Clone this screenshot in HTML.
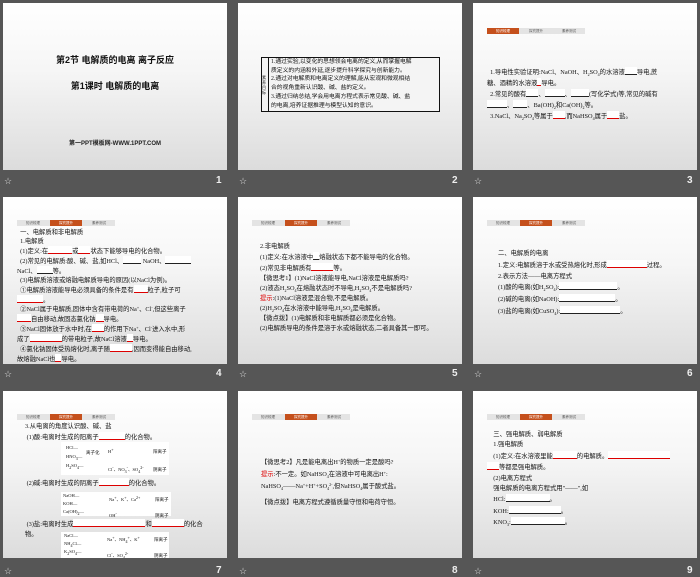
<!DOCTYPE html>
<html><head><meta charset="utf-8"><style>
body{margin:0;width:700px;height:577px;background:#565656;position:relative;overflow:hidden;font-family:"Liberation Serif","Noto Sans CJK SC",sans-serif;}
.s{position:absolute;width:224px;height:167px;background:linear-gradient(#fff 0%,#f6f6f6 40%,#dcdcdc 100%);overflow:hidden;}
.lb{position:absolute;color:#ddd;font-size:9px;font-family:"Liberation Sans",sans-serif;}
.n{position:absolute;color:#eee;font-size:10px;font-weight:bold;font-family:"Liberation Sans",sans-serif;}
.t{position:absolute;font-size:6.3px;line-height:10px;color:#111;white-space:nowrap;}
sub,sup{line-height:0;font-size:4px;vertical-align:baseline;position:relative}
sup{top:-0.6em}sub{top:0.4em}
.tabs{position:absolute;left:14px;top:25px;height:6px;width:98px;background:#e4e4e4;}
.tabs i{position:absolute;top:0;height:6px;width:32px;font-style:normal;font-size:3.5px;line-height:6px;text-align:center;color:#555;}
.tabs i.o{background:#c5501c;color:#fff}
.r{color:#d00}
.u{display:inline-block;border-bottom:0.7px solid #222;background:#fff;height:7px;vertical-align:-1px}
.ur{display:inline-block;border-bottom:0.8px solid #d00;background:#fff;height:7px;vertical-align:-1px}
.sm{font-size:4.5px}
</style></head><body>

<div class="s" style="left:3px;top:3px">
<div class="t" style="left:0;width:224px;text-align:center;top:52px;font-size:9px;font-weight:bold;font-family:'Liberation Sans','Noto Sans CJK SC',sans-serif;color:#111">第2节 电解质的电离 离子反应</div>
<div class="t" style="left:0;width:224px;text-align:center;top:78px;font-size:9px;font-weight:bold;font-family:'Liberation Sans','Noto Sans CJK SC',sans-serif;color:#111">第1课时 电解质的电离</div>
<div class="t" style="left:0;width:224px;text-align:center;top:136px;font-size:6px;font-weight:bold;font-family:'Liberation Sans','Noto Sans CJK SC',sans-serif;color:#222">第一PPT模板网-WWW.1PPT.COM</div>
</div>
<div class="lb" style="left:4px;top:176px">☆</div><div class="n" style="left:216px;top:175px">1</div>

<div class="s" style="left:238px;top:3px">
<div style="position:absolute;left:23px;top:54px;width:177px;height:53px;border:1.2px solid #111;background:#f4f4f4"></div>
<div style="position:absolute;left:30px;top:54px;width:1px;height:54px;background:#111"></div>
<div class="t" style="left:24px;top:72px;font-size:4px;line-height:5px;white-space:normal;width:6px">素养目标</div>
<div class="t" style="left:33px;top:55px;font-size:5.8px;line-height:8.7px">1.通过实验,以变化的思想领会电离的定义,从而掌握电解<br>质定义的内涵和外延,逐步提升科学探究与创新能力。<br>2.通过对电解质和电离定义的理解,能从宏观和微观相结<br>合的视角重新认识酸、碱、盐的定义。<br>3.通过归纳总结,学会用电离方程式表示常见酸、碱、盐<br>的电离,培养证据推理与模型认知的意识。</div>
</div>
<div class="lb" style="left:239px;top:176px">☆</div><div class="n" style="left:452px;top:175px">2</div>

<div class="s" style="left:473px;top:3px">
<div class="tabs"><i class="o" style="left:0">知识梳理</i><i style="left:33px">探究提升</i><i style="left:66px">素养测试</i></div>
<div class="t" style="left:14px;top:64px">&nbsp;&nbsp;1.导电性实验证明:NaCl、NaOH、H<sub>2</sub>SO<sub>4</sub>的水溶液<span class="u" style="width:12px"></span>导电,蔗<br>糖、酒精的水溶液<span class="ur" style="width:4px"></span>导电。<br>&nbsp;&nbsp;2.常见的酸有<span class="u" style="width:12px"></span>、<span class="u" style="width:20px"></span>、<span class="u" style="width:18px"></span>(写化学式)等,常见的碱有<br><span class="u" style="width:20px"></span>、<span class="u" style="width:14px"></span>、Ba(OH)<sub>2</sub>和Ca(OH)<sub>2</sub>等。<br>&nbsp;&nbsp;3.NaCl、Na<sub>2</sub>SO<sub>4</sub>等属于<span class="ur" style="width:12px"></span>,而NaHSO<sub>4</sub>属于<span class="ur" style="width:12px"></span>盐。</div>
</div>
<div class="lb" style="left:474px;top:176px">☆</div><div class="n" style="left:687px;top:175px">3</div>

<div class="s" style="left:3px;top:197px">
<div class="tabs" style="top:23px"><i style="left:0">知识梳理</i><i class="o" style="left:33px">探究提升</i><i style="left:66px">素养测试</i></div>
<div class="t" style="left:14px;top:31px;line-height:9px">&nbsp;&nbsp;一、电解质和非电解质<br>&nbsp;&nbsp;1.电解质<br>&nbsp;&nbsp;(1)定义:在<span class="ur" style="width:24px"></span>或<span class="ur" style="width:12px"></span>状态下能够导电的化合物。<br>&nbsp;&nbsp;(2)常见的电解质:酸、碱、盐,如HCl、<span class="u" style="width:18px"></span> NaOH、<span class="u" style="width:26px"></span><br>NaCl、<span class="u" style="width:16px"></span>等。<br>&nbsp;&nbsp;(3)电解质溶液或熔融电解质导电的原因(以NaCl为例)。<br>&nbsp;&nbsp;①电解质溶液能导电必须具备的条件是有<span class="ur" style="width:14px"></span>粒子,粒子可<br><span class="ur" style="width:26px"></span>。<br>&nbsp;&nbsp;②NaCl属于电解质,固体中含有带电荷的Na<sup>+</sup>、Cl<sup>-</sup>,但这些离子<br><span class="ur" style="width:14px"></span>自由移动,故固态氯化钠<span class="ur" style="width:8px"></span>导电。<br>&nbsp;&nbsp;③NaCl固体放于水中时,在<span class="ur" style="width:12px"></span>的作用下Na<sup>+</sup>、Cl<sup>-</sup>进入水中,形<br>成了<span class="ur" style="width:32px"></span>的带电粒子,故NaCl溶液<span class="ur" style="width:6px"></span>导电。<br>&nbsp;&nbsp;④氯化钠固体受热熔化时,离子随<span class="ur" style="width:22px"></span>,因而变得能自由移动,<br>故熔融NaCl也<span class="ur" style="width:6px"></span>导电。</div>
</div>
<div class="lb" style="left:4px;top:369px">☆</div><div class="n" style="left:216px;top:368px">4</div>

<div class="s" style="left:238px;top:197px">
<div class="tabs" style="top:23px"><i style="left:0">知识梳理</i><i class="o" style="left:33px">探究提升</i><i style="left:66px">素养测试</i></div>
<div class="t" style="left:22px;top:45px;line-height:10px">2.非电解质<br>(1)定义:在水溶液中<span class="u" style="width:6px"></span>熔融状态下都不能导电的化合物。<br>(2)常见非电解质有<span class="ur" style="width:22px"></span>等。<br>【微思考1】(1)NaCl溶液能导电,NaCl溶液是电解质吗?<br>(2)液态H<sub>2</sub>SO<sub>4</sub>在熔融状态时不导电,H<sub>2</sub>SO<sub>4</sub>不是电解质吗?<br><span class="r">提示</span>:(1)NaCl溶液是混合物,不是电解质。<br>(2)H<sub>2</sub>SO<sub>4</sub>在水溶液中能导电,H<sub>2</sub>SO<sub>4</sub>是电解质。<br>【微点拨】(1)电解质和非电解质都必须是化合物。<br>(2)电解质导电的条件是溶于水或熔融状态,二者具备其一即可。</div>
</div>
<div class="lb" style="left:239px;top:369px">☆</div><div class="n" style="left:452px;top:368px">5</div>

<div class="s" style="left:473px;top:197px">
<div class="tabs" style="top:23px"><i style="left:0">知识梳理</i><i class="o" style="left:33px">探究提升</i><i style="left:66px">素养测试</i></div>
<div class="t" style="left:25px;top:52px;line-height:10.8px">二、电解质的电离<br>1.定义:电解质溶于水或受热熔化时,形成<span class="ur" style="width:40px"></span>过程。<br>2.表示方法——电离方程式<br>(1)酸的电离(如H<sub>2</sub>SO<sub>4</sub>):<span class="u" style="width:58px"></span>。<br>(2)碱的电离(如NaOH):<span class="u" style="width:56px"></span>。<br>(3)盐的电离(如CuSO<sub>4</sub>):<span class="u" style="width:60px"></span>。</div>
</div>
<div class="lb" style="left:474px;top:369px">☆</div><div class="n" style="left:687px;top:368px">6</div>

<div class="s" style="left:3px;top:391px">
<div class="tabs" style="top:23px"><i style="left:0">知识梳理</i><i class="o" style="left:33px">探究提升</i><i style="left:66px">素养测试</i></div>
<div class="t" style="left:22px;top:31px;line-height:10px">3.从电离的角度认识酸、碱、盐<br>&nbsp;(1)酸:电离时生成的阳离子<span class="ur" style="width:26px"></span>的化合物。</div>
<div style="position:absolute;left:58px;top:51px;width:108px;height:33px;background:#fff"></div>
<div class="t sm" style="left:63px;top:52px;line-height:9px">HCl—<br>HNO<sub>3</sub>—<br>H<sub>2</sub>SO<sub>4</sub>—</div>
<div class="t sm" style="left:83px;top:59px;line-height:6px">离子化</div>
<div class="t sm" style="left:105px;top:52px;line-height:18px">H<sup>+</sup><br>Cl<sup>-</sup>、NO<sub>3</sub><sup>-</sup>、SO<sub>4</sub><sup>2-</sup></div>
<div class="t sm" style="left:150px;top:52px;line-height:18px">阳离子<br>阴离子</div>
<div class="t" style="left:22px;top:87px">&nbsp;(2)碱:电离时生成的阴离子<span class="ur" style="width:30px"></span>的化合物。</div>
<div style="position:absolute;left:58px;top:101px;width:110px;height:24px;background:#fff"></div>
<div class="t sm" style="left:60px;top:101px;line-height:8px">NaOH—<br>KOH—<br>Ca(OH)<sub>2</sub>—</div>
<div class="t sm" style="left:106px;top:101px;line-height:16px">Na<sup>+</sup>、K<sup>+</sup>、Ca<sup>2+</sup><br>OH<sup>-</sup></div>
<div class="t sm" style="left:152px;top:101px;line-height:16px">阳离子<br>阴离子</div>
<div class="t" style="left:22px;top:128px;line-height:10px">&nbsp;(3)盐:电离时生成<span class="ur" style="width:72px"></span>和<span class="ur" style="width:32px"></span>的化合<br>物。</div>
<div style="position:absolute;left:58px;top:141px;width:108px;height:26px;background:#fff"></div>
<div class="t sm" style="left:61px;top:141px;line-height:8px">NaCl—<br>NH<sub>4</sub>Cl—<br>K<sub>2</sub>SO<sub>4</sub>—</div>
<div class="t sm" style="left:104px;top:141px;line-height:16px">Na<sup>+</sup>、NH<sub>4</sub><sup>+</sup>、K<sup>+</sup><br>Cl<sup>-</sup>、SO<sub>4</sub><sup>2-</sup></div>
<div class="t sm" style="left:151px;top:141px;line-height:16px">阳离子<br>阴离子</div>
</div>
<div class="lb" style="left:4px;top:566px">☆</div><div class="n" style="left:216px;top:565px">7</div>

<div class="s" style="left:238px;top:391px">
<div class="tabs" style="top:23px"><i style="left:0">知识梳理</i><i class="o" style="left:33px">探究提升</i><i style="left:66px">素养测试</i></div>
<div class="t" style="left:23px;top:66px;line-height:12px">【微思考2】凡是能电离出H<sup>+</sup>的物质一定是酸吗?<br><span class="r">提示</span>:不一定。如NaHSO<sub>4</sub>在溶液中可电离出H<sup>+</sup>:<br>NaHSO<sub>4</sub>——Na<sup>+</sup>+H<sup>+</sup>+SO<sub>4</sub><sup>2-</sup>,但NaHSO<sub>4</sub>属于酸式盐。</div>
<div class="t" style="left:23px;top:107px">【微点拨】电离方程式遵循质量守恒和电荷守恒。</div>
</div>
<div class="lb" style="left:239px;top:566px">☆</div><div class="n" style="left:452px;top:565px">8</div>

<div class="s" style="left:473px;top:391px">
<div class="tabs" style="top:23px"><i style="left:0">知识梳理</i><i class="o" style="left:33px">探究提升</i><i style="left:66px">素养测试</i></div>
<div class="t" style="left:14px;top:39px;line-height:10.4px">&nbsp;&nbsp;&nbsp;&nbsp;三、强电解质、弱电解质<br>&nbsp;&nbsp;&nbsp;&nbsp;1.强电解质<br>&nbsp;&nbsp;&nbsp;&nbsp;(1)定义:在水溶液里能<span class="ur" style="width:24px"></span>的电解质。<span class="ur" style="width:62px"></span><br><span class="ur" style="width:12px"></span>等都是强电解质。<br>&nbsp;&nbsp;&nbsp;&nbsp;(2)电离方程式<br>&nbsp;&nbsp;&nbsp;&nbsp;强电解质的电离方程式用"——",如<br>&nbsp;&nbsp;&nbsp;&nbsp;HCl:<span class="u" style="width:44px"></span>。<br>&nbsp;&nbsp;&nbsp;&nbsp;KOH:<span class="u" style="width:52px"></span>。<br>&nbsp;&nbsp;&nbsp;&nbsp;KNO<sub>3</sub>:<span class="u" style="width:54px"></span>。</div>
</div>
<div class="lb" style="left:474px;top:566px">☆</div><div class="n" style="left:687px;top:565px">9</div>

</body></html>
